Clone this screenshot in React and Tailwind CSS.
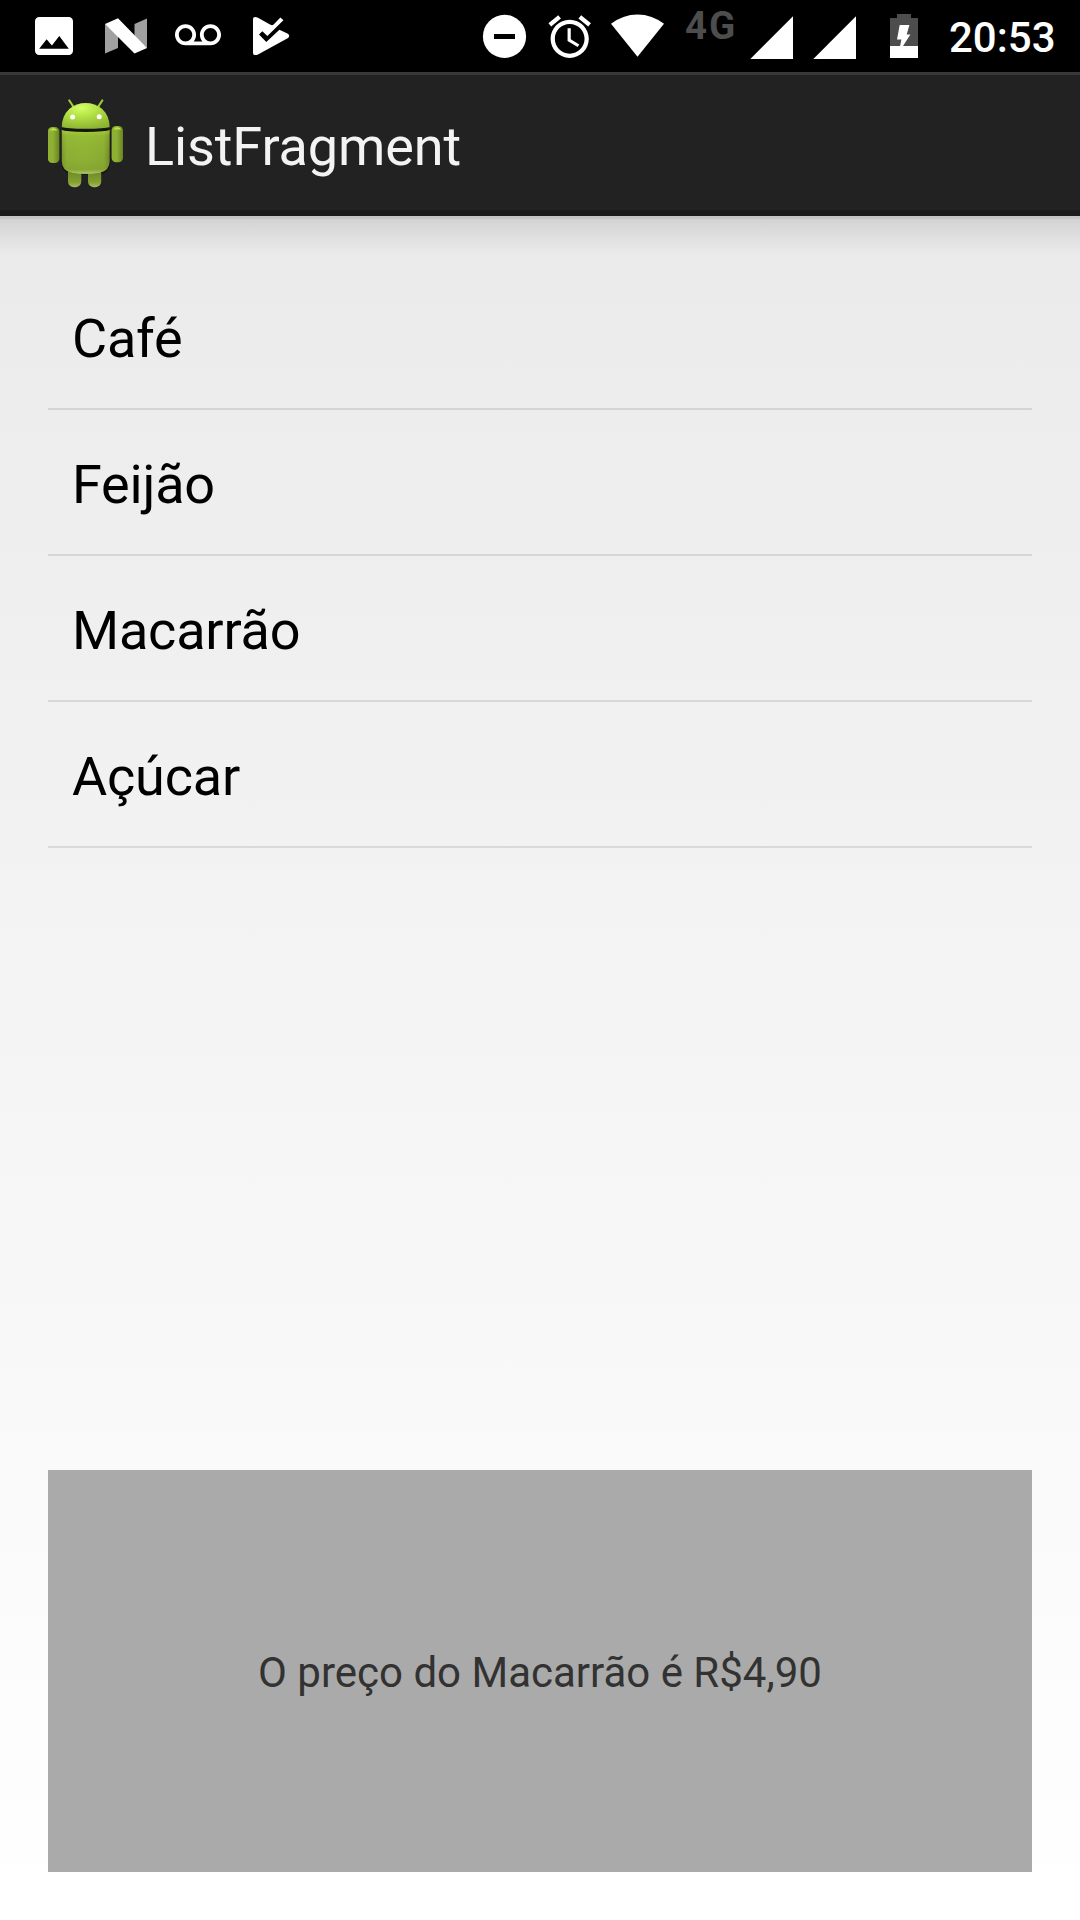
const products = ["Café", "Feijão", "Macarrão", "Açúcar"];

function StatusIcon({ x, width, children }) {
  return (
    <svg width={width} height="72" viewBox={`${x} 0 ${width} 72`} className="shrink-0" fill="#fff">
      {children}
    </svg>
  );
}

function Notifications() {
  return (
    <div className="flex pl-[18px]">
      <StatusIcon x={18} width={72}>
        <path
          transform="translate(28.67 10.67) scale(2.111)"
          d="M21 19V5c0-1.1-.9-2-2-2H5c-1.1 0-2 .9-2 2v14c0 1.1.9 2 2 2h14c1.1 0 2-.9 2-2zM8.5 13.5l2.5 3.01L14.5 12l4.5 6H5l3.5-4.5z"
        />
      </StatusIcon>
      <StatusIcon x={90} width={72}>
        <path fill="#a0a0a0" d="M105 24L118 35V48L105 53.4zM134.5 24L147 18.4V48L134.5 38z" />
        <path d="M105 24L118 18.3L147 48L134.5 53.5z" />
      </StatusIcon>
      <StatusIcon x={162} width={72}>
        <path
          transform="translate(175 12.7) scale(1.917)"
          d="M18.5 6C15.46 6 13 8.46 13 11.5c0 1.33.47 2.55 1.26 3.5H9.74c.79-.95 1.26-2.17 1.26-3.5C11 8.46 8.54 6 5.5 6S0 8.46 0 11.5 2.46 17 5.5 17h13c3.04 0 5.5-2.46 5.5-5.5S21.54 6 18.5 6zm-13 9C3.57 15 2 13.43 2 11.5S3.57 8 5.5 8 9 9.57 9 11.5 7.43 15 5.5 15zm13 0c-1.93 0-3.5-1.57-3.5-3.5S16.57 8 18.5 8 22 9.57 22 11.5 20.43 15 18.5 15z"
        />
      </StatusIcon>
      <StatusIcon x={234} width={72}>
        <path d="M253 19Q253 17 255 17Q256.3 17 257.5 17.6L270.5 24.8Q272.3 25.8 273.6 24.5L280.4 17.4L283.4 20.3L267.4 36.1L262.3 31.2L259 34.4L266.3 42L279.4 29.7L287.4 33.4Q289.2 34.4 289.2 35.8Q289.2 37.4 287.6 38.2L258 54.4Q256.4 55.2 254.6 55Q253 54.8 253 53z" />
      </StatusIcon>
    </div>
  );
}

function SystemIcons() {
  return (
    <div className="flex">
      <StatusIcon x={476} width={60}>
        <circle cx="504.5" cy="36.4" r="21.6" />
        <path fill="#000" d="M494 34h21v5h-21z" />
      </StatusIcon>
      <StatusIcon x={536} width={64}>
        <path
          transform="translate(544.2 11.2) scale(2.125)"
          d="M22 5.72l-4.6-3.86-1.29 1.53 4.6 3.86L22 5.72zM7.88 3.39L6.6 1.86 2 5.71l1.29 1.53 4.59-3.85zM12.5 8H11v6l4.75 2.85.75-1.23-4-2.37V8zM12 4c-4.97 0-9 4.03-9 9s4.02 9 9 9c4.97 0 9-4.03 9-9s-4.03-9-9-9zm0 16c-3.87 0-7-3.13-7-7s3.13-7 7-7 7 3.13 7 7-3.13 7-7 7z"
        />
      </StatusIcon>
      <StatusIcon x={600} width={84}>
        <path d="M637.5 56.7L611 23.7A43 43 0 0 1 664 23.7z" />
      </StatusIcon>
      <span className="w-[58px] pl-px pt-[4px] text-[38.5px] leading-[44px] font-bold tracking-[2px] text-[#4d4d4d]">4G</span>
      <StatusIcon x={742} width={62}>
        <path d="M750.3 59L793 16.3V59z" />
      </StatusIcon>
      <StatusIcon x={804} width={64}>
        <path d="M813.3 59L856 16.3V59z" />
      </StatusIcon>
      <StatusIcon x={868} width={80}>
        <path fill="#4d4d4d" d="M890 18h7v-4h14v4h7v28h-28z" />
        <path d="M890 46h28v12h-28z" />
        <path d="M899.7 25H909.4L906.7 34.4H910.4L902.7 46.4H900L901.4 39.6H897z" />
      </StatusIcon>
      <span className="w-[132px] pl-px pt-[14px] text-[42px] leading-[48px] font-medium text-white">20:53</span>
    </div>
  );
}

function RobotLogo() {
  return (
    <svg width="96" height="141" viewBox="48 75 96 141" className="shrink-0">
      <defs>
        <linearGradient id="torso" x1="0" x2="1" y1="0" y2="0">
          <stop offset="0" stopColor="#78942a" />
          <stop offset="0.1" stopColor="#90b336" />
          <stop offset="0.5" stopColor="#93b735" />
          <stop offset="0.88" stopColor="#8cad33" />
          <stop offset="1" stopColor="#6b8524" />
        </linearGradient>
        <linearGradient id="torsoShade" x1="0" x2="0" y1="0" y2="1">
          <stop offset="0" stopColor="#b6e03a" stopOpacity="0.8" />
          <stop offset="0.15" stopColor="#9cc437" stopOpacity="0.4" />
          <stop offset="0.65" stopColor="#7e9e2e" stopOpacity="0.2" />
          <stop offset="0.9" stopColor="#809c2f" stopOpacity="0.6" />
          <stop offset="1" stopColor="#b1cc75" />
        </linearGradient>
        <radialGradient id="head" cx="0.4" cy="0.18" r="0.85">
          <stop offset="0" stopColor="#d5ff68" />
          <stop offset="0.4" stopColor="#b3e345" />
          <stop offset="1" stopColor="#8db331" />
        </radialGradient>
        <linearGradient id="limb" x1="0" x2="1" y1="0" y2="0">
          <stop offset="0" stopColor="#90b033" />
          <stop offset="0.45" stopColor="#8eb033" />
          <stop offset="1" stopColor="#688423" />
        </linearGradient>
        <linearGradient id="leg" x1="0" x2="0" y1="0" y2="1">
          <stop offset="0" stopColor="#65801f" />
          <stop offset="0.75" stopColor="#83a02f" />
          <stop offset="1" stopColor="#a5bd69" />
        </linearGradient>
      </defs>
      <path d="M61.3 128h49v33q0 13-12 14h-25q-12-1-12-14z" fill="#171717" />
      <path d="M69.3 100.5l4.3 6.5M102.3 100.5l-4.3 6.5" stroke="#a0c83a" strokeWidth="2.2" strokeLinecap="round" />
      <rect x="68" y="166" width="13.3" height="21.3" rx="6" fill="url(#leg)" />
      <rect x="88" y="166" width="13.2" height="21.3" rx="6" fill="url(#leg)" />
      <rect x="47.8" y="127" width="11.6" height="36" rx="4.5" fill="url(#limb)" />
      <rect x="111.6" y="126" width="11.4" height="36.3" rx="4.5" fill="url(#limb)" />
      <path d="M49.4 130.6q3.9-5 8.4 0M113.2 129.6q3.9-5 8.4 0" fill="#b7e343" />
      <path d="M61.8 129q4 2 24 2t23.8-2v32q0 10-10.5 11.7q-13.5 2-26.6 0q-10.7-1.7-10.7-11.7z" fill="url(#torso)" />
      <path d="M61.8 129q4 2 24 2t23.8-2v32q0 10-10.5 11.7q-13.5 2-26.6 0q-10.7-1.7-10.7-11.7z" fill="url(#torsoShade)" />
      <path d="M61.8 129q4 2 24 2t23.8-2" stroke="#12160a" strokeWidth="1.8" fill="none" />
      <path d="M61.8 127Q61.8 116 69.5 108.8Q76.4 103 85.6 103Q95 103 102 108.8Q109.6 116 109.6 127q-5 1.8-24 1.8t-23.8-1.8z" fill="url(#head)" />
      <circle cx="72.6" cy="117" r="2.5" fill="#fff" />
      <circle cx="99.2" cy="116.8" r="2.5" fill="#fff" />
    </svg>
  );
}

export default function App() {
  return (
    <div className="flex h-[1920px] w-[1080px] flex-col overflow-hidden bg-linear-to-b from-[#e8e8e8] to-white font-[Roboto,sans-serif]">
      <div className="flex h-[72px] shrink-0 justify-between bg-black">
        <Notifications />
        <SystemIcons />
      </div>
      <header className="flex h-[144px] shrink-0 border-t-[3px] border-b-[6px] border-t-[#393939] border-b-[#1b1b1b] bg-[#222222] pl-12">
        <RobotLogo />
        <h1 className="pl-px pt-10 text-[54px] leading-[64px] tracking-[-0.1px] text-[#f3f3f3]">ListFragment</h1>
      </header>
      <div className="h-[3px] shrink-0 bg-[#c5c5c5]" />
      <div className="h-[45px] shrink-0 bg-linear-to-b from-black/10 to-transparent to-80%" />
      <main className="flex min-h-0 flex-1 flex-col px-12 pb-12">
        <ul className="flex-1">
          {products.map((name) => (
            <li key={name} className="flex h-[146px] items-center border-b-2 border-black/10 px-6 pt-1.5 text-[54px] leading-[64px] tracking-[-0.2px] text-black">
              {name}
            </li>
          ))}
        </ul>
        <section className="flex h-[402px] shrink-0 items-center justify-center bg-[#aaaaaa] pt-1 text-[42px] leading-[50px] text-[#323232]">
          O preço do Macarrão é R$4,90
        </section>
      </main>
    </div>
  );
}
